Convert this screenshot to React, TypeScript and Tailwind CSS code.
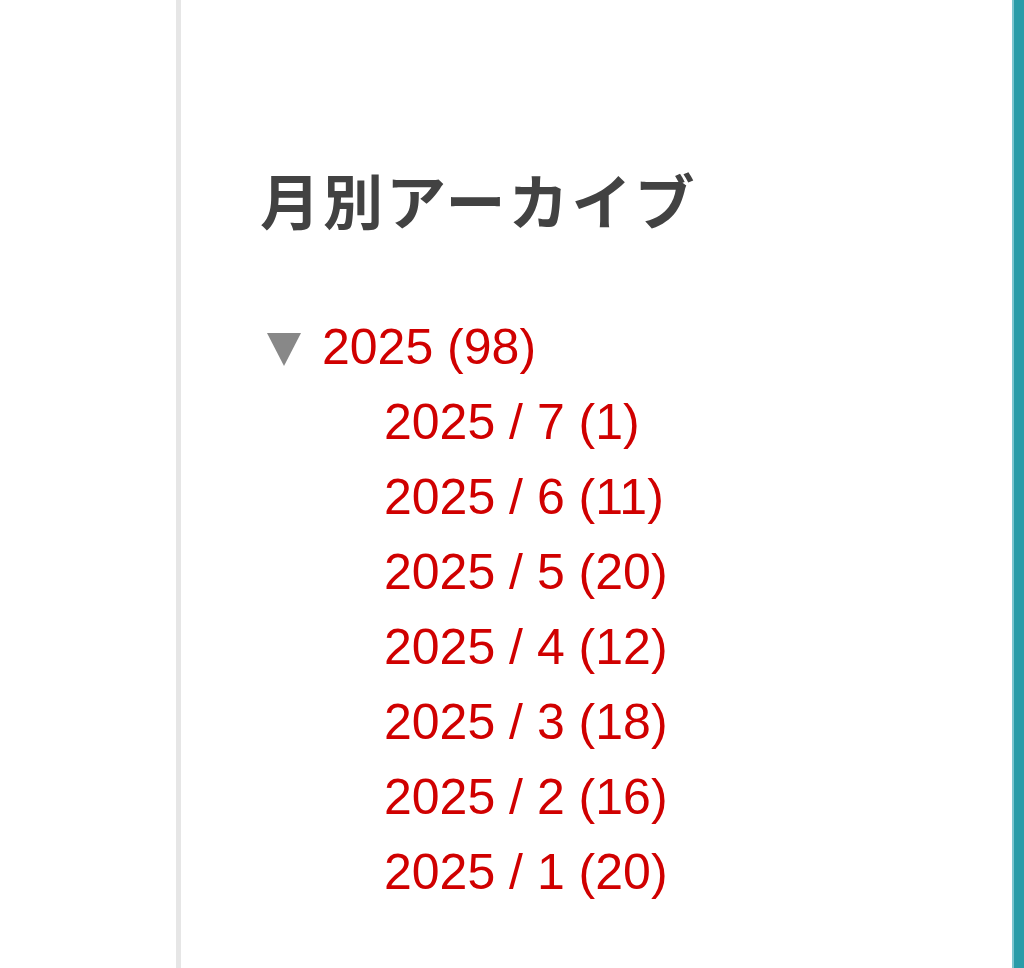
export default function App() {
  const months = [
    { label: '2025 / 7', count: 1 },
    { label: '2025 / 6', count: 11 },
    { label: '2025 / 5', count: 20 },
    { label: '2025 / 4', count: 12 },
    { label: '2025 / 3', count: 18 },
    { label: '2025 / 2', count: 16 },
    { label: '2025 / 1', count: 20 },
  ]

  return (
    <div className="flex h-[968px] w-full overflow-hidden bg-white">
      <div className="w-[176px] shrink-0" />
      <div className="w-[5px] shrink-0 bg-[#e6e6e6]" />

      {/* Sidebar archive module */}
      <section className="flex-1 pl-[79px] pt-[169px]">
        <h2 className="text-[60px] font-bold leading-none tracking-[3px] text-[#424242] [font-family:'Noto_Sans_CJK_JP','Noto_Sans',sans-serif]">
          月別アーカイブ
        </h2>

        <ul className="mt-[81px] text-[50px] leading-[75px] text-[#d00000] [font-family:'Liberation_Sans',Arial,sans-serif]">
          <li>
            <div className="flex items-center">
              <svg width="34" height="34" viewBox="0 0 34 34" className="ml-[7px] mr-[21px] mt-[2px]">
                <polygon points="0,1 34,1 17,34" fill="#888888" />
              </svg>
              <a href="#">2025 (98)</a>
            </div>
            <ul className="pl-[124px]">
              {months.map((m) => (
                <li key={m.label}>
                  <a href="#">
                    {m.label} ({m.count})
                  </a>
                </li>
              ))}
            </ul>
          </li>
        </ul>
      </section>

      {/* Right edge accent */}
      <div className="flex w-[12px] shrink-0">
        <div className="w-[2px] bg-[#7cc6cf]" />
        <div className="flex-1 bg-[#2a9ca8]" />
      </div>
    </div>
  )
}
